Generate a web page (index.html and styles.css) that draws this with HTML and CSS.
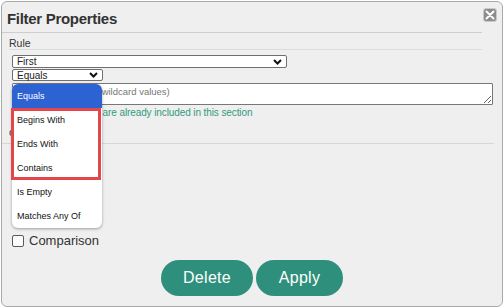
FILE: index.html
```html
<!DOCTYPE html>
<html lang="en">
<head>
    <meta charset="UTF-8">
    <meta name="viewport" content="width=device-width, initial-scale=1.0">
    <title>Filter Properties</title>
    <link rel="stylesheet" href="styles.css">
</head>
<body>
    <div class="dialog">
        <div class="dialog-header">
            <h1 class="dialog-title">Filter Properties</h1>
            <button class="close-btn" aria-label="Close">
                <svg width="10" height="10" viewBox="0 0 10 10">
                    <path d="M1.5 1.5 L8.5 8.5 M8.5 1.5 L1.5 8.5" stroke="#fff" stroke-width="2" stroke-linecap="round"/>
                </svg>
            </button>
        </div>
        <hr class="sep sep-top">

        <div class="section">
            <div class="section-label">Rule</div>
            <div class="select select-wide">
                <span>First</span>
                <svg class="chevron" width="9" height="6" viewBox="0 0 9 6"><path d="M1 1 L4.5 4.5 L8 1" fill="none" stroke="#111" stroke-width="2"/></svg>
            </div>
            <div class="select select-small">
                <span>Equals</span>
                <svg class="chevron" width="9" height="6" viewBox="0 0 9 6"><path d="M1 1 L4.5 4.5 L8 1" fill="none" stroke="#111" stroke-width="2"/></svg>
            </div>
            <textarea class="values" placeholder="Enter values (allows wildcard values)"></textarea>
            <p class="note">Additional values are already included in this section</p>
            <div class="sub-label">case</div>
        </div>
        <hr class="sep sep-bottom">

        <label class="check">
            <input type="checkbox">
            <span>Comparison</span>
        </label>

        <div class="actions">
            <button class="btn">Delete</button>
            <button class="btn btn-apply">Apply</button>
        </div>

        <!-- open dropdown of the operator select -->
        <ul class="dropdown">
            <li class="active">Equals</li>
            <li>Begins With</li>
            <li>Ends With</li>
            <li>Contains</li>
            <li>Is Empty</li>
            <li>Matches Any Of</li>
        </ul>
        <div class="highlight"></div>
    </div>
</body>
</html>
```

FILE: styles.css
```css
:root {
    --bg-color: #efefef;
    --border-color: #a9a9a9;
    --text-color: #333;
    --green: #2e907c;
    --blue: #2d62d3;
    --red: #e2474b;
}

* {
    box-sizing: border-box;
}

body {
    margin: 0;
    background: #fff;
    font-family: 'Liberation Sans', Arial, sans-serif;
    color: var(--text-color);
}

.dialog {
    position: relative;
    width: 502px;
    height: 306px;
    margin: 1px 0 0 1px;
    background: var(--bg-color);
    border: 1px solid var(--border-color);
    border-radius: 6px;
}

.dialog-header {
    display: flex;
    justify-content: space-between;
    align-items: flex-start;
}

.dialog-title {
    margin: 8px 0 0 5px;
    font-size: 15px;
    line-height: 18px;
    letter-spacing: -0.3px;
    font-weight: bold;
    color: #333;
}

.close-btn {
    margin: 6px 5px 0 0;
    width: 14px;
    height: 14px;
    padding: 0;
    border: 1px solid #c9c9c9;
    border-radius: 3px;
    background: #8c8c8c;
    display: flex;
    align-items: center;
    justify-content: center;
}

.sep {
    border: none;
    height: 1px;
    margin: 0;
}

.sep-top {
    margin: 4px 0 0 0;
    width: 480px;
    background: #cdcdcd;
}

.section {
    padding: 0 0 0 10px;
}

.section-label {
    margin: 5px 0 0 -3px;
    width: 473px;
    font-size: 10.5px;
    line-height: 11px;
    border-bottom: 1px solid #dcdcdc;
}

.select {
    display: flex;
    align-items: center;
    justify-content: space-between;
    background: #fff;
    border: 1px solid #6f6f6f;
    border-radius: 2px;
    font-size: 10px;
    padding: 0 4px 0 4px;
    color: #222;
}

.select-wide {
    margin-top: 5px;
    width: 275px;
    height: 13px;
}

.select-small {
    margin-top: 1px;
    width: 91px;
    height: 12px;
}

.values {
    display: block;
    margin: 2px 0 0 0;
    width: 481px;
    height: 22px;
    padding: 2px 1px;
    border: 1px solid #777;
    border-radius: 1px;
    font-family: 'Liberation Sans', Arial, sans-serif;
    font-size: 9.5px;
    resize: vertical;
}

.values::placeholder {
    color: #777;
}

.note {
    margin: 1px 0 0 14px;
    font-size: 10px;
    line-height: 13px;
    letter-spacing: -0.1px;
    color: #2f9a7e;
}

.sub-label {
    margin: 7px 0 4px -3px;
    font-size: 11px;
    line-height: 13px;
}

.sep-bottom {
    margin: 0;
    width: 492px;
    background: #d6d6d6;
}

.check {
    display: flex;
    align-items: center;
    gap: 5px;
    margin: 89px 0 0 10px;
    font-size: 13px;
    line-height: 16px;
    color: #333;
}

.check input {
    appearance: none;
    margin: 0;
    width: 12px;
    height: 12px;
    border: 1px solid #5a5a5a;
    border-radius: 2px;
    background: #fbfbfb;
}

.actions {
    display: flex;
    justify-content: center;
    gap: 3px;
    margin-top: 11px;
}

.btn {
    height: 36px;
    width: 92px;
    border: none;
    border-radius: 18px;
    background: var(--green);
    color: #fff;
    font-family: 'Liberation Sans', Arial, sans-serif;
    font-size: 16px;
    letter-spacing: 0.3px;
}

.btn-apply {
    width: 87px;
}

.dropdown {
    position: absolute;
    left: 10px;
    top: 82px;
    width: 90px;
    margin: 0;
    padding: 0;
    list-style: none;
    background: #fff;
    border-radius: 6px;
    overflow: hidden;
    box-shadow: 0 1px 3px rgba(0, 0, 0, 0.35);
}

.dropdown li {
    height: 24px;
    line-height: 24px;
    padding-left: 5px;
    font-size: 9px;
    color: #111;
}

.dropdown li.active {
    background: var(--blue);
    color: #fff;
}

.highlight {
    position: absolute;
    left: 9px;
    top: 106px;
    width: 90px;
    height: 72px;
    border: 3px solid var(--red);
}
```
